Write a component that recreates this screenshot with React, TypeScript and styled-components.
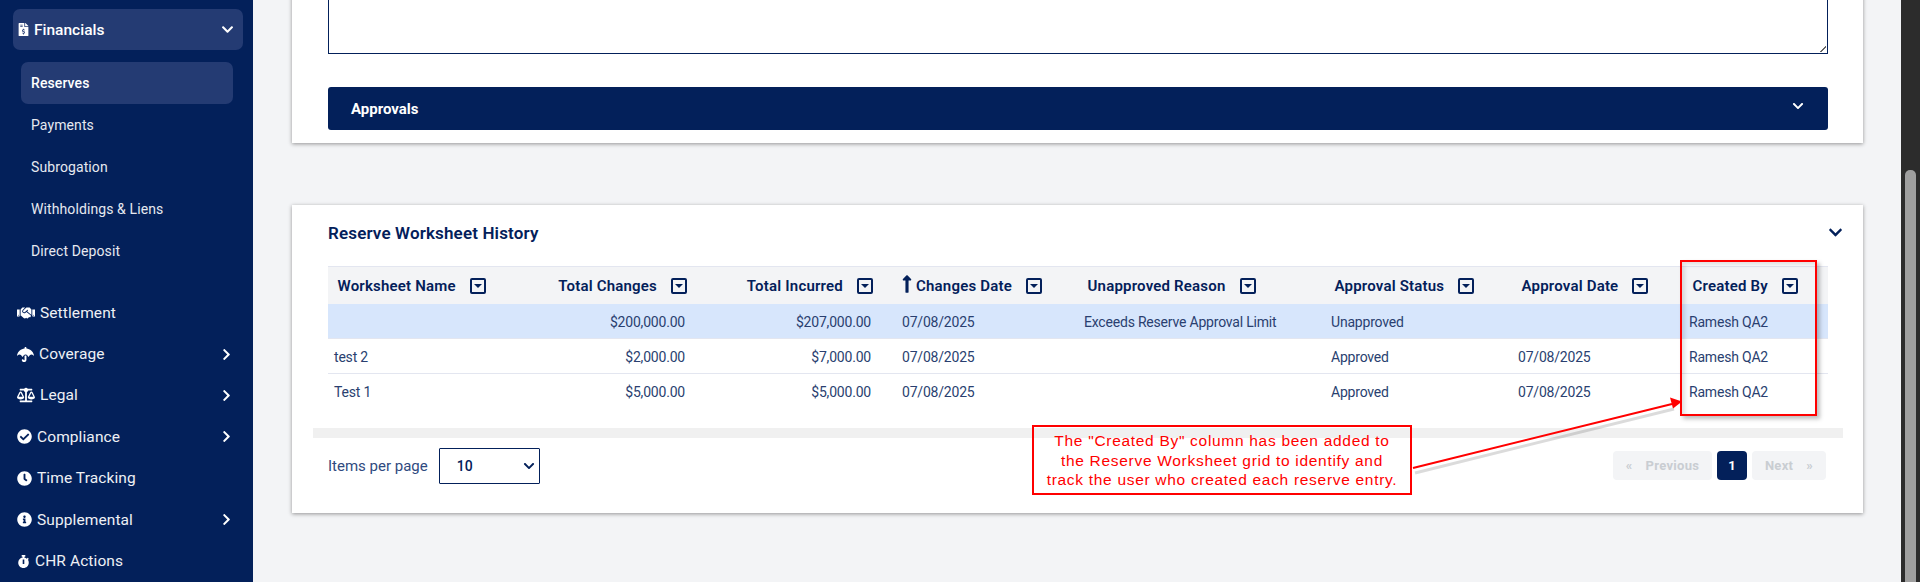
import React from "react";
import styled, { createGlobalStyle } from "styled-components";
import {
  FaBalanceScale,
  FaCheckCircle,
  FaChevronDown,
  FaChevronRight,
  FaClock,
  FaFileInvoiceDollar,
  FaHandshake,
  FaInfoCircle,
  FaLongArrowAltUp,
  FaStopwatch,
  FaUmbrella,
} from "react-icons/fa";

const NAVY = "#03205a";
const FONT = `Roboto, "Liberation Sans", sans-serif`;

const navItems = [
  { label: "Settlement", icon: FaHandshake, iconWidth: 18, gap: 5 },
  { label: "Coverage", icon: FaUmbrella, iconWidth: 17, gap: 5, more: true },
  { label: "Legal", icon: FaBalanceScale, iconWidth: 18, gap: 5, more: true },
  { label: "Compliance", icon: FaCheckCircle, iconWidth: 15, gap: 5, more: true },
  { label: "Time Tracking", icon: FaClock, iconWidth: 15, gap: 5 },
  { label: "Supplemental", icon: FaInfoCircle, iconWidth: 15, gap: 5, more: true },
  { label: "CHR Actions", icon: FaStopwatch, iconWidth: 13, gap: 5 },
];

const subItems = ["Reserves", "Payments", "Subrogation", "Withholdings & Liens", "Direct Deposit"];

const columns = [
  { title: "Worksheet Name", width: 217, align: "left" },
  { title: "Total Changes", width: 146, align: "right" },
  { title: "Total Incurred", width: 186, align: "right" },
  { title: "Changes Date", width: 201, align: "left", sorted: true },
  { title: "Unapproved Reason", width: 247, align: "left" },
  { title: "Approval Status", width: 187, align: "left" },
  { title: "Approval Date", width: 171, align: "left" },
  { title: "Created By", width: 145, align: "left" },
];

const rows = [
  ["", "$200,000.00", "$207,000.00", "07/08/2025", "Exceeds Reserve Approval Limit", "Unapproved", "", "Ramesh QA2"],
  ["test 2", "$2,000.00", "$7,000.00", "07/08/2025", "", "Approved", "07/08/2025", "Ramesh QA2"],
  ["Test 1", "$5,000.00", "$5,000.00", "07/08/2025", "", "Approved", "07/08/2025", "Ramesh QA2"],
];

export default function App() {
  return (
    <Page>
      <GlobalStyle />
      <Sidebar>
        <GroupHead>
          <FaFileInvoiceDollar size={13} />
          <GroupLabel>Financials</GroupLabel>
          <FaChevronDown size={13} />
        </GroupHead>
        <SubList>
          {subItems.map((item, i) => (
            <SubItem key={item} $active={i === 0}>
              {item}
            </SubItem>
          ))}
        </SubList>
        <NavList>
          {navItems.map(({ label, icon: Icon, iconWidth, gap, more }) => (
            <NavItem key={label} $gap={gap}>
              <Icon size={iconWidth} />
              <NavLabel>{label}</NavLabel>
              {more && <FaChevronRight size={13} />}
            </NavItem>
          ))}
        </NavList>
      </Sidebar>

      <Main>
        <TopCard>
          <NotesBox />
          <AccordionBar>
            <span>Approvals</span>
            <FaChevronDown size={12} />
          </AccordionBar>
        </TopCard>

        <HistoryCard>
          <CardHead>
            <CardTitle>Reserve Worksheet History</CardTitle>
            <FaChevronDown size={15} />
          </CardHead>
          <GridWrap>
            <Grid>
              <colgroup>
                {columns.map((c) => (
                  <col key={c.title} width={c.width} />
                ))}
              </colgroup>
              <thead>
                <tr>
                  {columns.map((c) => (
                    <HeadCell key={c.title} $align={c.align} $sorted={c.sorted}>
                      <HeadInner $align={c.align}>
                        {c.sorted && <SortArrow />}
                        <span>{c.title}</span>
                        <FilterButton />
                      </HeadInner>
                    </HeadCell>
                  ))}
                </tr>
              </thead>
              <tbody>
                {rows.map((row, r) => (
                  <Row key={r} $selected={r === 0}>
                    {row.map((value, i) => (
                      <Cell key={i} $align={columns[i].align} $sorted={columns[i].sorted}>
                        {value}
                      </Cell>
                    ))}
                  </Row>
                ))}
              </tbody>
            </Grid>
          </GridWrap>
          <HScrollTrack />
          <Footer>
            <PageSize>
              <span>Items per page</span>
              <SelectWrap>
                <SizeSelect defaultValue="10">
                  <option>10</option>
                  <option>25</option>
                  <option>50</option>
                </SizeSelect>
                <FaChevronDown size={12} />
              </SelectWrap>
            </PageSize>
            <Pager>
              <PagerButton $width={99} disabled>
                <span>«</span>
                <span>Previous</span>
              </PagerButton>
              <PageNumber>1</PageNumber>
              <PagerButton $width={74} disabled>
                <span>Next</span>
                <span>»</span>
              </PagerButton>
            </Pager>
          </Footer>
        </HistoryCard>
      </Main>

      <ScrollRail>
        <ScrollThumb />
      </ScrollRail>

      <ColumnHighlight />
      <Callout>
        The "Created By" column has been added to
        <br />
        the Reserve Worksheet grid to identify and
        <br />
        track the user who created each reserve entry.
      </Callout>
      <ArrowLine viewBox="0 0 280 80" width="280" height="80">
        <line x1="3" y1="73" x2="262" y2="9" stroke="rgba(0,0,0,.14)" strokeWidth="3" transform="translate(2 3)" />
        <line x1="3" y1="71" x2="262" y2="7" stroke="#f00" strokeWidth="2" />
        <polygon points="272,4.5 260,0.5 263,11.5" fill="#f00" />
      </ArrowLine>
    </Page>
  );
}

const GlobalStyle = createGlobalStyle`
  html, body {
    margin: 0;
    padding: 0;
    background: #f3f4f6;
  }

  * {
    box-sizing: border-box;
  }
`;

const Page = styled.div`
  position: relative;
  display: flex;
  width: 1920px;
  height: 582px;
  overflow: hidden;
  font-family: ${FONT};
`;

const Sidebar = styled.aside`
  flex: 0 0 253px;
  padding: 9px 10px 0 13px;
  background: ${NAVY};
  color: #fff;
`;

const GroupHead = styled.div`
  display: flex;
  align-items: center;
  gap: 4px;
  height: 41px;
  padding: 0 9px 0 4px;
  background: #243b73;
  border-radius: 7px;
`;

const GroupLabel = styled.span`
  flex: 1;
  font-size: 15.5px;
  font-weight: 500;
`;

const SubList = styled.div`
  margin: 12px 10px 0 8px;
`;

const SubItem = styled.div<{ $active?: boolean }>`
  display: flex;
  align-items: center;
  height: 42px;
  padding-left: 10px;
  border-radius: 7px;
  background: ${(props) => (props.$active ? "#243b73" : "transparent")};
  color: ${(props) => (props.$active ? "#fff" : "#e6e9f0")};
  font-size: 14px;
  font-weight: ${(props) => (props.$active ? 500 : 400)};
  letter-spacing: 0.1px;
`;

const NavList = styled.div`
  margin-top: 20px;
  padding: 0 0 0 4px;
`;

const NavItem = styled.div<{ $gap: number }>`
  display: flex;
  align-items: center;
  gap: ${(props) => props.$gap}px;
  height: 41.4px;
  padding-right: 10px;
`;

const NavLabel = styled.span`
  flex: 1;
  font-size: 15.5px;
  color: #eef0f5;
  letter-spacing: 0.1px;
`;

const Main = styled.main`
  flex: 1;
  padding: 0 38px 0 39px;
`;

const TopCard = styled.section`
  margin-top: -20px;
  padding: 0 35px 13px 36px;
  background: #fff;
  box-shadow: 0 1px 4px rgba(0, 0, 0, 0.4);
`;

const NotesBox = styled.div`
  position: relative;
  height: 74px;
  border: 1px solid ${NAVY};
  background: #fff;

  &::after {
    content: "";
    position: absolute;
    right: 1px;
    bottom: 1px;
    width: 8px;
    height: 8px;
    background: repeating-linear-gradient(135deg, transparent 0 2px, #666 2px 3px, transparent 3px 5px);
    clip-path: polygon(100% 0, 100% 100%, 0 100%);
  }
`;

const AccordionBar = styled.div`
  display: flex;
  align-items: center;
  justify-content: space-between;
  height: 43px;
  margin-top: 33px;
  padding: 0 24px 0 23px;
  background: ${NAVY};
  border-radius: 3px;
  color: #fff;
  font-size: 15px;
  font-weight: 700;

  svg {
    margin-top: -5px;
  }
`;

const HistoryCard = styled.section`
  margin-top: 62px;
  padding: 0 20px 29px 21px;
  background: #fff;
  box-shadow: 0 1px 4px rgba(0, 0, 0, 0.4);
`;

const CardHead = styled.header`
  display: flex;
  align-items: center;
  justify-content: space-between;
  height: 61px;
  padding: 0 0 6px 15px;
  color: ${NAVY};
`;

const CardTitle = styled.h2`
  margin: 0;
  font-size: 17px;
  font-weight: 600;
  letter-spacing: 0.15px;
`;

const GridWrap = styled.div`
  padding: 0 15px;
`;

const Grid = styled.table`
  width: 1500px;
  border-collapse: collapse;
  table-layout: fixed;
`;

const HeadCell = styled.th<{ $align: string; $sorted?: boolean }>`
  height: 37px;
  padding: 1px ${(props) => (props.$align === "right" ? "4px" : "0")} 0
    ${(props) => (props.$sorted ? "25px" : props.$align === "left" ? "9.5px" : "0")};
  background: #f3f4f6;
  border-top: 1px solid #e3e6f0;
`;

const HeadInner = styled.div<{ $align: string }>`
  display: flex;
  align-items: center;
  justify-content: ${(props) => (props.$align === "right" ? "flex-end" : "flex-start")};
  color: ${NAVY};
  font-size: 15px;
  font-weight: 600;
  letter-spacing: 0.2px;
  white-space: nowrap;
`;

const SortArrow = styled(FaLongArrowAltUp)`
  width: 18px;
  height: 20px;
  margin: -3px 0 0 -4px;
`;

const FilterButton = styled.span`
  position: relative;
  flex: 0 0 16px;
  height: 16px;
  margin-left: 14px;
  border: 2px solid ${NAVY};
  border-radius: 2px;

  &::after {
    content: "";
    position: absolute;
    top: 4px;
    left: 2px;
    border-width: 4px 4px 0;
    border-style: solid;
    border-color: ${NAVY} transparent transparent;
  }
`;

const Row = styled.tr<{ $selected?: boolean }>`
  height: 35px;
  background: ${(props) => (props.$selected ? "#d7e6fc" : "#fff")};
  border-bottom: 1px solid #e3e6f0;

  &:last-child {
    border-bottom: 0;
  }
`;

const Cell = styled.td<{ $align: string; $sorted?: boolean }>`
  padding: 2px 6px 0 ${(props) => (props.$sorted ? "25px" : "6px")};
  color: #2a3f70;
  font-size: 14px;
  letter-spacing: -0.2px;
  text-align: ${(props) => props.$align};
  white-space: nowrap;
`;

const HScrollTrack = styled.div`
  height: 10px;
  margin-top: 19px;
  background: #f0f0f0;
`;

const Footer = styled.footer`
  display: flex;
  align-items: center;
  justify-content: space-between;
  margin-top: 10px;
  padding: 0 17px 0 15px;
`;

const PageSize = styled.div`
  display: flex;
  align-items: center;
  gap: 11px;
  color: #2f4a80;
  font-size: 15px;
`;

const SelectWrap = styled.div`
  position: relative;
  width: 101px;
  height: 36px;
  color: ${NAVY};

  svg {
    position: absolute;
    top: 12px;
    right: 5px;
    pointer-events: none;
  }
`;

const SizeSelect = styled.select`
  width: 100%;
  height: 100%;
  padding: 0 0 0 17px;
  appearance: none;
  border: 1px solid ${NAVY};
  border-radius: 1px;
  background: #fff;
  color: ${NAVY};
  font-family: ${FONT};
  font-size: 14px;
  font-weight: 500;
`;

const Pager = styled.div`
  display: flex;
  gap: 5px;
`;

const PagerButton = styled.button<{ $width: number }>`
  display: flex;
  align-items: center;
  justify-content: center;
  gap: 13px;
  width: ${(props) => props.$width}px;
  height: 29px;
  padding: 0;
  border: 0;
  border-radius: 4px;
  background: #f3f4f6;
  color: #c9cdd2;
  font-family: ${FONT};
  font-size: 13px;
  font-weight: 700;
  letter-spacing: 0.3px;
`;

const PageNumber = styled.span`
  display: flex;
  align-items: center;
  justify-content: center;
  width: 30px;
  height: 29px;
  border-radius: 4px;
  background: ${NAVY};
  color: #fff;
  font-size: 13px;
  font-weight: 700;
`;

const ScrollRail = styled.div`
  flex: 0 0 19px;
  padding: 170px 4px 0;
  background: #2c2c2c;
`;

const ScrollThumb = styled.div`
  height: 100%;
  border-radius: 5px 5px 0 0;
  background: #9f9f9f;
`;

const ColumnHighlight = styled.div`
  position: absolute;
  top: 260px;
  left: 1680px;
  width: 137px;
  height: 156px;
  border: 2px solid #f00;
  box-shadow: 3px 3px 4px rgba(0, 0, 0, 0.25), inset 3px 3px 4px rgba(0, 0, 0, 0.12);
`;

const Callout = styled.div`
  position: absolute;
  top: 425px;
  left: 1032px;
  width: 380px;
  height: 70px;
  padding-top: 4px;
  border: 2px solid #f00;
  color: #f00;
  font-family: "Liberation Sans", Arial, sans-serif;
  font-size: 15.5px;
  letter-spacing: 0.7px;
  line-height: 19.6px;
  text-align: center;
  white-space: nowrap;
`;

const ArrowLine = styled.svg`
  position: absolute;
  top: 397px;
  left: 1410px;
`;
